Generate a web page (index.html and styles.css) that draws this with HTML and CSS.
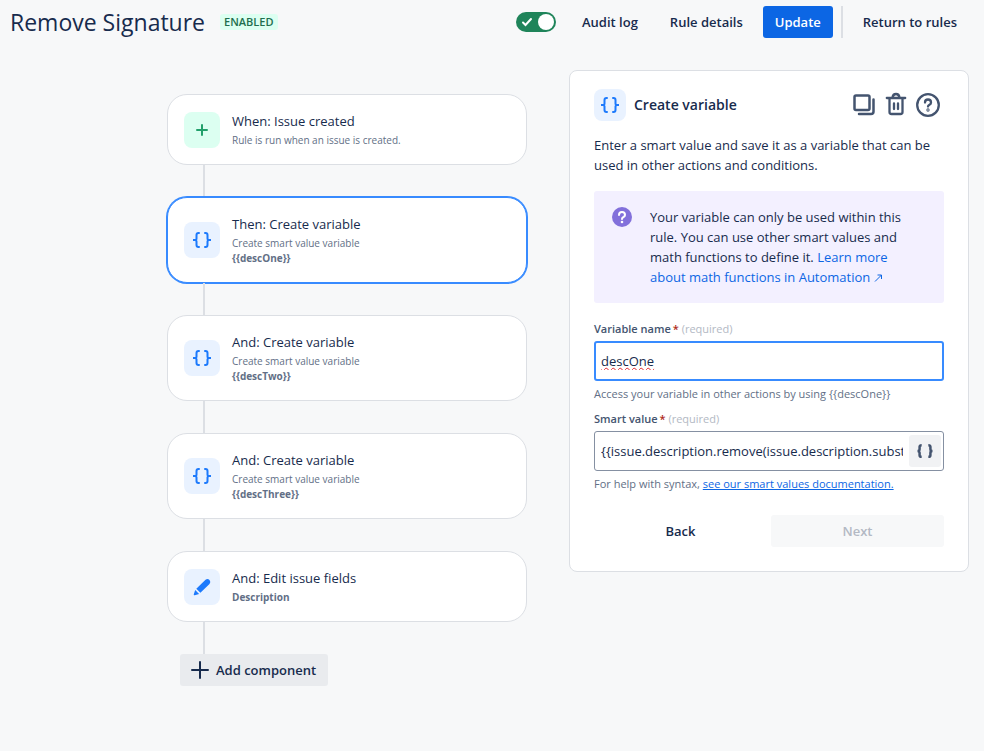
FILE: index.html
```html
<!DOCTYPE html>
<html lang="en">
<head>
  <meta charset="UTF-8">
  <meta name="viewport" content="width=device-width, initial-scale=1.0">
  <title>Remove Signature</title>
  <link rel="stylesheet" href="styles.css">
</head>
<body>
  <!-- shared icons -->
  <svg class="icon-defs" width="0" height="0" aria-hidden="true">
    <symbol id="braces" viewBox="0 0 24 24">
      <path d="M9 5H8.500Q6.500 5 6.500 7V10.500Q6.500 12 5 12H3H5Q6.500 12 6.500 13.500V17Q6.500 19 8.500 19H9M15 5H15.500Q17.500 5 17.500 7V10.500Q17.500 12 19 12H21H19Q17.500 12 17.500 13.500V17Q17.500 19 15.500 19H15" fill="none" stroke="currentColor" stroke-width="2" stroke-linecap="round"/>
    </symbol>
  </svg>

  <header class="topbar">
    <h1>Remove Signature</h1>
    <span class="badge">Enabled</span>
    <div class="actions">
      <label class="toggle">
        <input type="checkbox" aria-label="Rule enabled" checked>
        <svg class="toggle-check" viewBox="0 0 12 10"><path d="M2 5.500L4.500 8L10 2" fill="none" stroke="currentColor" stroke-width="2" stroke-linecap="round"/></svg>
      </label>
      <button class="btn" type="button">Audit log</button>
      <button class="btn" type="button">Rule details</button>
      <button class="btn btn-primary" type="button">Update</button>
      <span class="divider"></span>
      <a class="btn" href="#">Return to rules</a>
    </div>
  </header>

  <main class="layout">
    <section class="flow">
      <div class="card">
        <span class="tile tile-green">
          <svg width="24" height="24" viewBox="0 0 24 24"><path d="M12 7V17M7 12H17" fill="none" stroke="currentColor" stroke-width="2" stroke-linecap="round"/></svg>
        </span>
        <div class="card-text">
          <h2>When: Issue created</h2>
          <p>Rule is run when an issue is created.</p>
        </div>
      </div>
      <div class="connector"></div>
      <div class="card selected">
        <span class="tile"><svg width="24" height="24"><use href="#braces"/></svg></span>
        <div class="card-text">
          <h2>Then: Create variable</h2>
          <p>Create smart value variable</p>
          <p><strong>{{descOne}}</strong></p>
        </div>
      </div>
      <div class="connector"></div>
      <div class="card">
        <span class="tile"><svg width="24" height="24"><use href="#braces"/></svg></span>
        <div class="card-text">
          <h2>And: Create variable</h2>
          <p>Create smart value variable</p>
          <p><strong>{{descTwo}}</strong></p>
        </div>
      </div>
      <div class="connector"></div>
      <div class="card">
        <span class="tile"><svg width="24" height="24"><use href="#braces"/></svg></span>
        <div class="card-text">
          <h2>And: Create variable</h2>
          <p>Create smart value variable</p>
          <p><strong>{{descThree}}</strong></p>
        </div>
      </div>
      <div class="connector"></div>
      <div class="card">
        <span class="tile">
          <svg width="24" height="24" viewBox="0 0 24 24"><path d="M6.300 13.800L15.500 4.800Q17.500 3.200 19.500 4.900Q21.300 7 19.500 9L10.400 17.800ZM5.200 15L9.100 18.900L4.800 20.300Q3.400 20.500 3.800 19.200Z" fill="currentColor"/></svg>
        </span>
        <div class="card-text">
          <h2>And: Edit issue fields</h2>
          <p><strong>Description</strong></p>
        </div>
      </div>
      <div class="connector"></div>
      <button class="btn btn-add" type="button">
        <svg width="20" height="20" viewBox="0 0 20 20"><path d="M10 2V18M2 10H18" fill="none" stroke="currentColor" stroke-width="2" stroke-linecap="round"/></svg>
        Add component
      </button>
    </section>

    <aside class="panel">
      <div class="panel-head">
        <span class="tile tile-small"><svg width="24" height="24"><use href="#braces"/></svg></span>
        <h2>Create variable</h2>
        <div class="panel-tools">
          <button type="button" aria-label="Duplicate">
            <svg width="24" height="24" viewBox="0 0 24 24" fill="none" stroke="currentColor" stroke-width="2.500" stroke-linecap="round"><rect x="2.500" y="2.500" width="15" height="14.500" rx="1.500"/><path d="M21.500 6.500V18.500Q21.500 21 19 21H7"/></svg>
          </button>
          <button type="button" aria-label="Delete">
            <svg width="24" height="24" viewBox="0 0 24 24" fill="none" stroke="currentColor" stroke-width="2.300" stroke-linecap="round"><path d="M2.800 5H21.200M8.500 4.500Q9 1 12 1T15.500 4.500M5.500 5.500V19Q5.500 21 7.500 21H16.500Q18.500 21 18.500 19V5.500M10 10.500V16M14 10.500V16"/></svg>
          </button>
          <button type="button" aria-label="Help">
            <svg width="24" height="24" viewBox="0 0 24 24" fill="none" stroke="currentColor" stroke-width="2.300" stroke-linecap="round"><circle cx="12" cy="12" r="10.800"/><path d="M9 9.500Q9 6.500 12 6.500T15 9.500Q15 11 13.500 11.700Q12 12.500 12 13.500"/><circle cx="12" cy="17" r="0.500"/></svg>
          </button>
        </div>
      </div>

      <p class="intro">Enter a smart value and save it as a variable that can be used in other actions and conditions.</p>

      <div class="info">
        <svg class="info-icon" width="20" height="20" viewBox="0 0 20 20"><circle cx="10" cy="10" r="10" fill="#8270db"/><path d="M7 8Q7 5 10 5T13 8Q13 9.300 11.500 10Q10 10.600 10 12" fill="none" stroke="#fff" stroke-width="2" stroke-linecap="round"/><circle cx="10" cy="15" r="1.300" fill="#fff"/></svg>
        <p>Your variable can only be used within this rule. You can use other smart values and math functions to define it. <a href="#">Learn more about math functions in Automation <svg width="10" height="8" viewBox="0 0 10 8"><path d="M1 7.500L7.500 1M3.500 1H7.500V5" fill="none" stroke="currentColor"/></svg></a></p>
      </div>

      <form>
        <div class="field">
          <label for="variable-name">Variable name<span class="star">*</span> <span class="required">(required)</span></label>
          <input class="text-input active misspelled" type="text" id="variable-name" value="descOne">
          <p class="hint">Access your variable in other actions by using {{descOne}}</p>
        </div>

        <div class="field">
          <label for="smart-value">Smart value<span class="star">*</span> <span class="required">(required)</span></label>
          <div class="text-input input-group">
            <input type="text" id="smart-value" value="{{issue.description.remove(issue.description.substringAfter())}}">
            <button type="button" aria-label="Insert smart value">
              <svg width="20" height="20" viewBox="0 0 24 24"><path d="M8 5Q5.500 5 5.500 7V9.500Q5.500 12 3 12Q5.500 12 5.500 14.500V17Q5.500 19 8 19M16 5Q18.500 5 18.500 7V9.500Q18.500 12 21 12Q18.500 12 18.500 14.500V17Q18.500 19 16 19" fill="none" stroke="currentColor" stroke-width="3"/></svg>
            </button>
          </div>
          <p class="hint">For help with syntax, <a href="#">see our smart values documentation.</a></p>
        </div>

        <div class="buttons">
          <button class="btn" type="button">Back</button>
          <button class="btn btn-next" type="submit" disabled>Next</button>
        </div>
      </form>
    </aside>
  </main>
</body>
</html>
```
FILE: styles.css
```css
:root {
  --text: #172b4d;
  --subtle: #626f86;
  --icon: #44546f;
  --blue: #0c66e4;
  --focus: #388bff;
  --border: #dcdfe4;
}

* {
  box-sizing: border-box;
}

body {
  margin: 0;
  min-height: 100vh;
  background: #f7f8f9;
  color: var(--text);
  font-family: "Open Sans", "Noto Sans", sans-serif;
  font-size: 13px;
  line-height: 20px;
}

h1,
h2,
p {
  margin: 0;
}

svg {
  display: block;
}

button,
input {
  font: inherit;
  color: inherit;
}

button {
  border: none;
  background: none;
  cursor: pointer;
}

a {
  color: var(--blue);
  text-decoration: none;
}

.icon-defs {
  position: absolute;
}

/* top bar */
.topbar {
  display: flex;
  align-items: center;
  padding: 6px 15px 6px 10px;
}

.topbar h1 {
  font-size: 23px;
  font-weight: 400;
  line-height: 32px;
}

.badge {
  margin-left: 15px;
  padding: 0 4px;
  border-radius: 3px;
  background: #dcfff1;
  color: #216e4e;
  font-size: 11px;
  font-weight: 600;
  line-height: 16px;
  text-transform: uppercase;
}

.actions {
  display: flex;
  align-items: center;
  gap: 8px;
  margin-left: auto;
}

.btn {
  display: flex;
  align-items: center;
  justify-content: center;
  height: 32px;
  padding: 0 12px;
  border-radius: 3px;
  color: var(--text);
  font-weight: 600;
  white-space: nowrap;
}

.btn-primary {
  background: var(--blue);
  color: #fff;
}

.divider {
  width: 2px;
  height: 32px;
  background: var(--border);
}

.toggle {
  display: grid;
  align-items: center;
  margin-right: 6px;
}

.toggle input {
  grid-area: 1 / 1;
  display: flex;
  align-items: center;
  justify-content: flex-end;
  width: 40px;
  height: 20px;
  margin: 0;
  padding: 2px;
  border-radius: 10px;
  background: var(--subtle);
  appearance: none;
}

.toggle input:checked {
  background: #1f845a;
}

.toggle input::after {
  content: "";
  width: 16px;
  height: 16px;
  border-radius: 50%;
  background: #fff;
}

.toggle-check {
  grid-area: 1 / 1;
  width: 12px;
  height: 10px;
  margin-left: 5px;
  color: #fff;
}

/* layout */
.layout {
  display: grid;
  grid-template-columns: 1fr 400px;
  align-items: start;
  gap: 42px;
  padding: 26px 15px 26px 10px;
}

.flow {
  width: 100%;
  max-width: 360px;
  margin-left: auto;
  padding-top: 24px;
}

.card {
  display: flex;
  align-items: center;
  gap: 12px;
  padding: 16px;
  border: 1px solid var(--border);
  border-radius: 20px;
  background: #fff;
}

.card.selected {
  border-color: var(--focus);
  box-shadow: 0 0 0 1px var(--focus);
}

.card h2 {
  margin-bottom: 2px;
  font-size: 13px;
  font-weight: 400;
}

.card p {
  color: var(--subtle);
  font-size: 10px;
  line-height: 15px;
}

.card strong {
  font-weight: 700;
}

.tile {
  display: flex;
  align-items: center;
  justify-content: center;
  flex: none;
  width: 36px;
  height: 36px;
  border-radius: 8px;
  background: #e9f2ff;
  color: #1d7afc;
}

.tile-green {
  background: #dcfff1;
  color: #22a06b;
}

.tile-small {
  width: 32px;
  height: 32px;
}

.connector {
  width: 2px;
  height: 32px;
  margin-left: 36px;
  background: var(--border);
}

.btn-add {
  gap: 6px;
  margin-left: 13px;
  padding: 0 12px 0 10px;
  background: #e9ebee;
}

/* side panel */
.panel {
  padding: 18px 24px 24px;
  border: 1px solid var(--border);
  border-radius: 8px;
  background: #fff;
}

.panel-head {
  display: flex;
  align-items: center;
  gap: 8px;
}

.panel-head h2 {
  font-size: 14px;
  font-weight: 600;
}

.panel-tools {
  display: flex;
  gap: 8px;
  margin: 0 4px 0 auto;
  color: var(--icon);
}

.panel-tools button {
  padding: 0;
}

.panel-tools svg {
  overflow: visible;
}

.intro {
  margin: 14px 0 16px;
}

.info {
  display: flex;
  gap: 18px;
  padding: 16px 24px 16px 18px;
  border-radius: 3px;
  background: #f3f0ff;
}

.info-icon {
  flex: none;
}

.info a svg {
  display: inline;
}

form {
  margin-top: 18px;
}

.field {
  margin-bottom: 8px;
}

.field label {
  display: block;
  margin-bottom: 4px;
  color: var(--icon);
  font-size: 11px;
  font-weight: 600;
  line-height: 16px;
}

.star {
  padding-left: 2px;
  color: #ae2a19;
}

.required {
  color: #b3b9c4;
  font-weight: 400;
}

.text-input {
  width: 100%;
  height: 40px;
  padding: 0 6px;
  border: 1px solid #8590a2;
  border-radius: 3px;
  background: #fff;
  outline: none;
}

.text-input.active {
  padding: 0 5px;
  border: 2px solid var(--focus);
}

.misspelled {
  text-decoration: underline wavy #e5252a 1px;
}

.input-group {
  display: flex;
  align-items: center;
  gap: 6px;
  padding-right: 2px;
}

.input-group input {
  flex: 1;
  min-width: 0;
  padding: 0;
  border: none;
  outline: none;
}

.input-group button {
  display: flex;
  align-items: center;
  justify-content: center;
  width: 32px;
  height: 32px;
  padding: 0;
  border-radius: 3px;
  background: #f1f2f4;
  color: var(--icon);
}

.hint {
  margin-top: 4px;
  color: var(--subtle);
  font-size: 11px;
  line-height: 18px;
}

.hint a {
  text-decoration: underline;
}

.buttons {
  display: grid;
  grid-template-columns: 1fr 1fr;
  gap: 4px;
  margin-top: 22px;
}

.btn-next {
  background: #f7f8f9;
  color: #b3b9c4;
}
```
